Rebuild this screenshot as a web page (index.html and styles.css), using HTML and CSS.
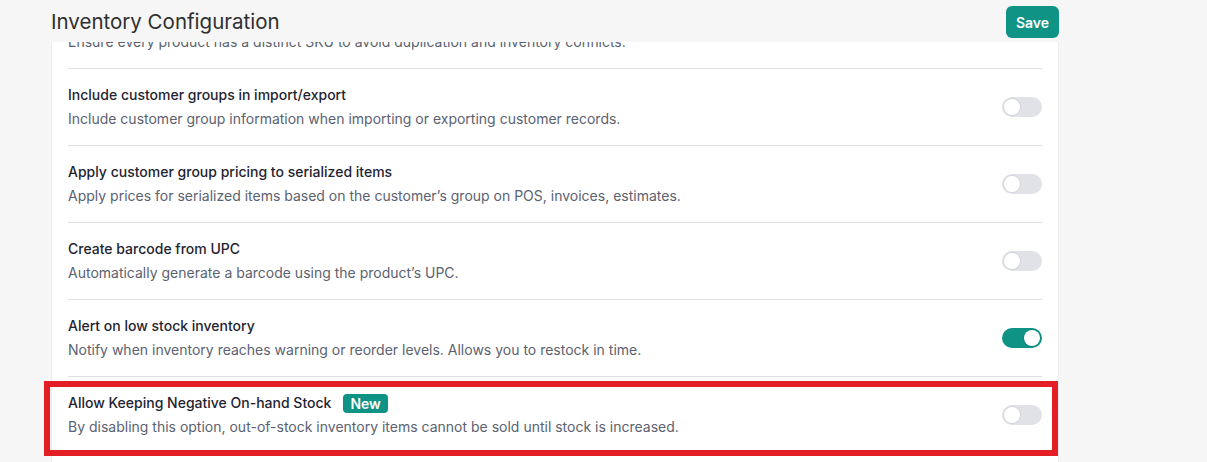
FILE: index.html
```html
<!DOCTYPE html>
<html lang="en">

<head>
    <meta charset="UTF-8" />
    <meta name="viewport" content="width=device-width, initial-scale=1.0" />
    <title>Inventory Configuration</title>
    <link rel="stylesheet" href="styles.css">
</head>

<body>
    <div class="page">
        <header class="page-header">
            <h1 class="page-title">Inventory Configuration</h1>
            <button class="save-btn" type="button">Save</button>
        </header>

        <div class="settings-card">
            <div class="settings-list">
                <div class="setting-row">
                    <div class="setting-text">
                        <div class="setting-desc">Ensure every product has a distinct SKU to avoid duplication and inventory conflicts.</div>
                    </div>
                </div>

                <div class="setting-row">
                    <div class="setting-text">
                        <div class="setting-title">Include customer groups in import/export</div>
                        <div class="setting-desc">Include customer group information when importing or exporting customer records.</div>
                    </div>
                    <div class="toggle"><div class="toggle-knob"></div></div>
                </div>

                <div class="setting-row">
                    <div class="setting-text">
                        <div class="setting-title">Apply customer group pricing to serialized items</div>
                        <div class="setting-desc">Apply prices for serialized items based on the customer’s group on POS, invoices, estimates.</div>
                    </div>
                    <div class="toggle"><div class="toggle-knob"></div></div>
                </div>

                <div class="setting-row">
                    <div class="setting-text">
                        <div class="setting-title">Create barcode from UPC</div>
                        <div class="setting-desc">Automatically generate a barcode using the product’s UPC.</div>
                    </div>
                    <div class="toggle"><div class="toggle-knob"></div></div>
                </div>

                <div class="setting-row">
                    <div class="setting-text">
                        <div class="setting-title">Alert on low stock inventory</div>
                        <div class="setting-desc">Notify when inventory reaches warning or reorder levels. Allows you to restock in time.</div>
                    </div>
                    <div class="toggle on"><div class="toggle-knob"></div></div>
                </div>

                <div class="setting-row highlighted">
                    <div class="setting-text">
                        <div class="setting-title">Allow Keeping Negative On-hand Stock <span class="badge">New</span></div>
                        <div class="setting-desc">By disabling this option, out-of-stock inventory items cannot be sold until stock is increased.</div>
                    </div>
                    <div class="toggle"><div class="toggle-knob"></div></div>
                    <span class="highlight-frame"></span>
                </div>
            </div>
        </div>
    </div>

    <script>
        // flip switches on click
        document.querySelectorAll('.toggle').forEach(t => {
            t.onclick = () => t.classList.toggle('on');
        });
    </script>
</body>

</html>
```

FILE: styles.css
```css
body {
    margin: 0;
    padding: 0;
    font-family: 'Inter', 'Noto Sans', sans-serif;
    background: #f6f6f6;
    color: #1f2430;
    height: 100vh;
    overflow: hidden;
}

.page {
    width: 1008px;
    margin-left: 51px;
}

.page-header {
    display: flex;
    align-items: center;
    justify-content: space-between;
    height: 42px;
    position: relative;
    z-index: 2;
    background: #f6f6f6;
}

.page-title {
    margin: 1px 0 0;
    font-size: 20.5px;
    font-weight: 400;
    color: #2f2f2f;
}

.save-btn {
    width: 53px;
    height: 32px;
    margin-top: 2px;
    border: none;
    border-radius: 6px;
    background: #0e9384;
    color: #fff;
    font-family: 'Inter', sans-serif;
    font-size: 14px;
    font-weight: 600;
    cursor: pointer;
}

.settings-card {
    background: #fff;
    border-left: 1px solid #ececec;
    border-right: 1px solid #ececec;
    min-height: 500px;
}

.settings-list {
    margin-top: -26px;
    padding: 0 16px;
}

.setting-row {
    display: flex;
    align-items: center;
    justify-content: space-between;
    padding: 16px 0;
    border-bottom: 1px solid #dfe1e7;
    position: relative;
}

.setting-row.highlighted {
    border-bottom: none;
}

.setting-title {
    font-size: 14px;
    font-weight: 500;
    line-height: 20px;
    color: #1f2430;
    margin-bottom: 4px;
    display: flex;
    align-items: center;
}

.setting-desc {
    font-size: 14px;
    line-height: 20px;
    color: #5b6270;
}

.badge {
    display: inline-block;
    margin-left: 12px;
    padding: 0 7px;
    height: 19px;
    line-height: 19px;
    border-radius: 4px;
    background: #0e9384;
    color: #fff;
    font-size: 14px;
    font-weight: 600;
}

/* switch */
.toggle {
    width: 40px;
    height: 20px;
    border-radius: 10px;
    background: #e0e2e7;
    position: relative;
    flex-shrink: 0;
    cursor: pointer;
    transition: background 0.2s;
}

.toggle.on {
    background: #0e9384;
}

.toggle-knob {
    width: 16px;
    height: 16px;
    border-radius: 50%;
    background: #fff;
    position: absolute;
    top: 2px;
    left: 2px;
    box-shadow: 0 0 0 1px rgba(0, 0, 0, 0.06);
    transition: left 0.2s;
}

.toggle.on .toggle-knob {
    left: 22px;
}

/* red callout around a row */
.highlight-frame {
    position: absolute;
    top: 4px;
    bottom: -3px;
    left: -24px;
    right: -16px;
    border: 6px solid #e31e24;
    pointer-events: none;
}
```
